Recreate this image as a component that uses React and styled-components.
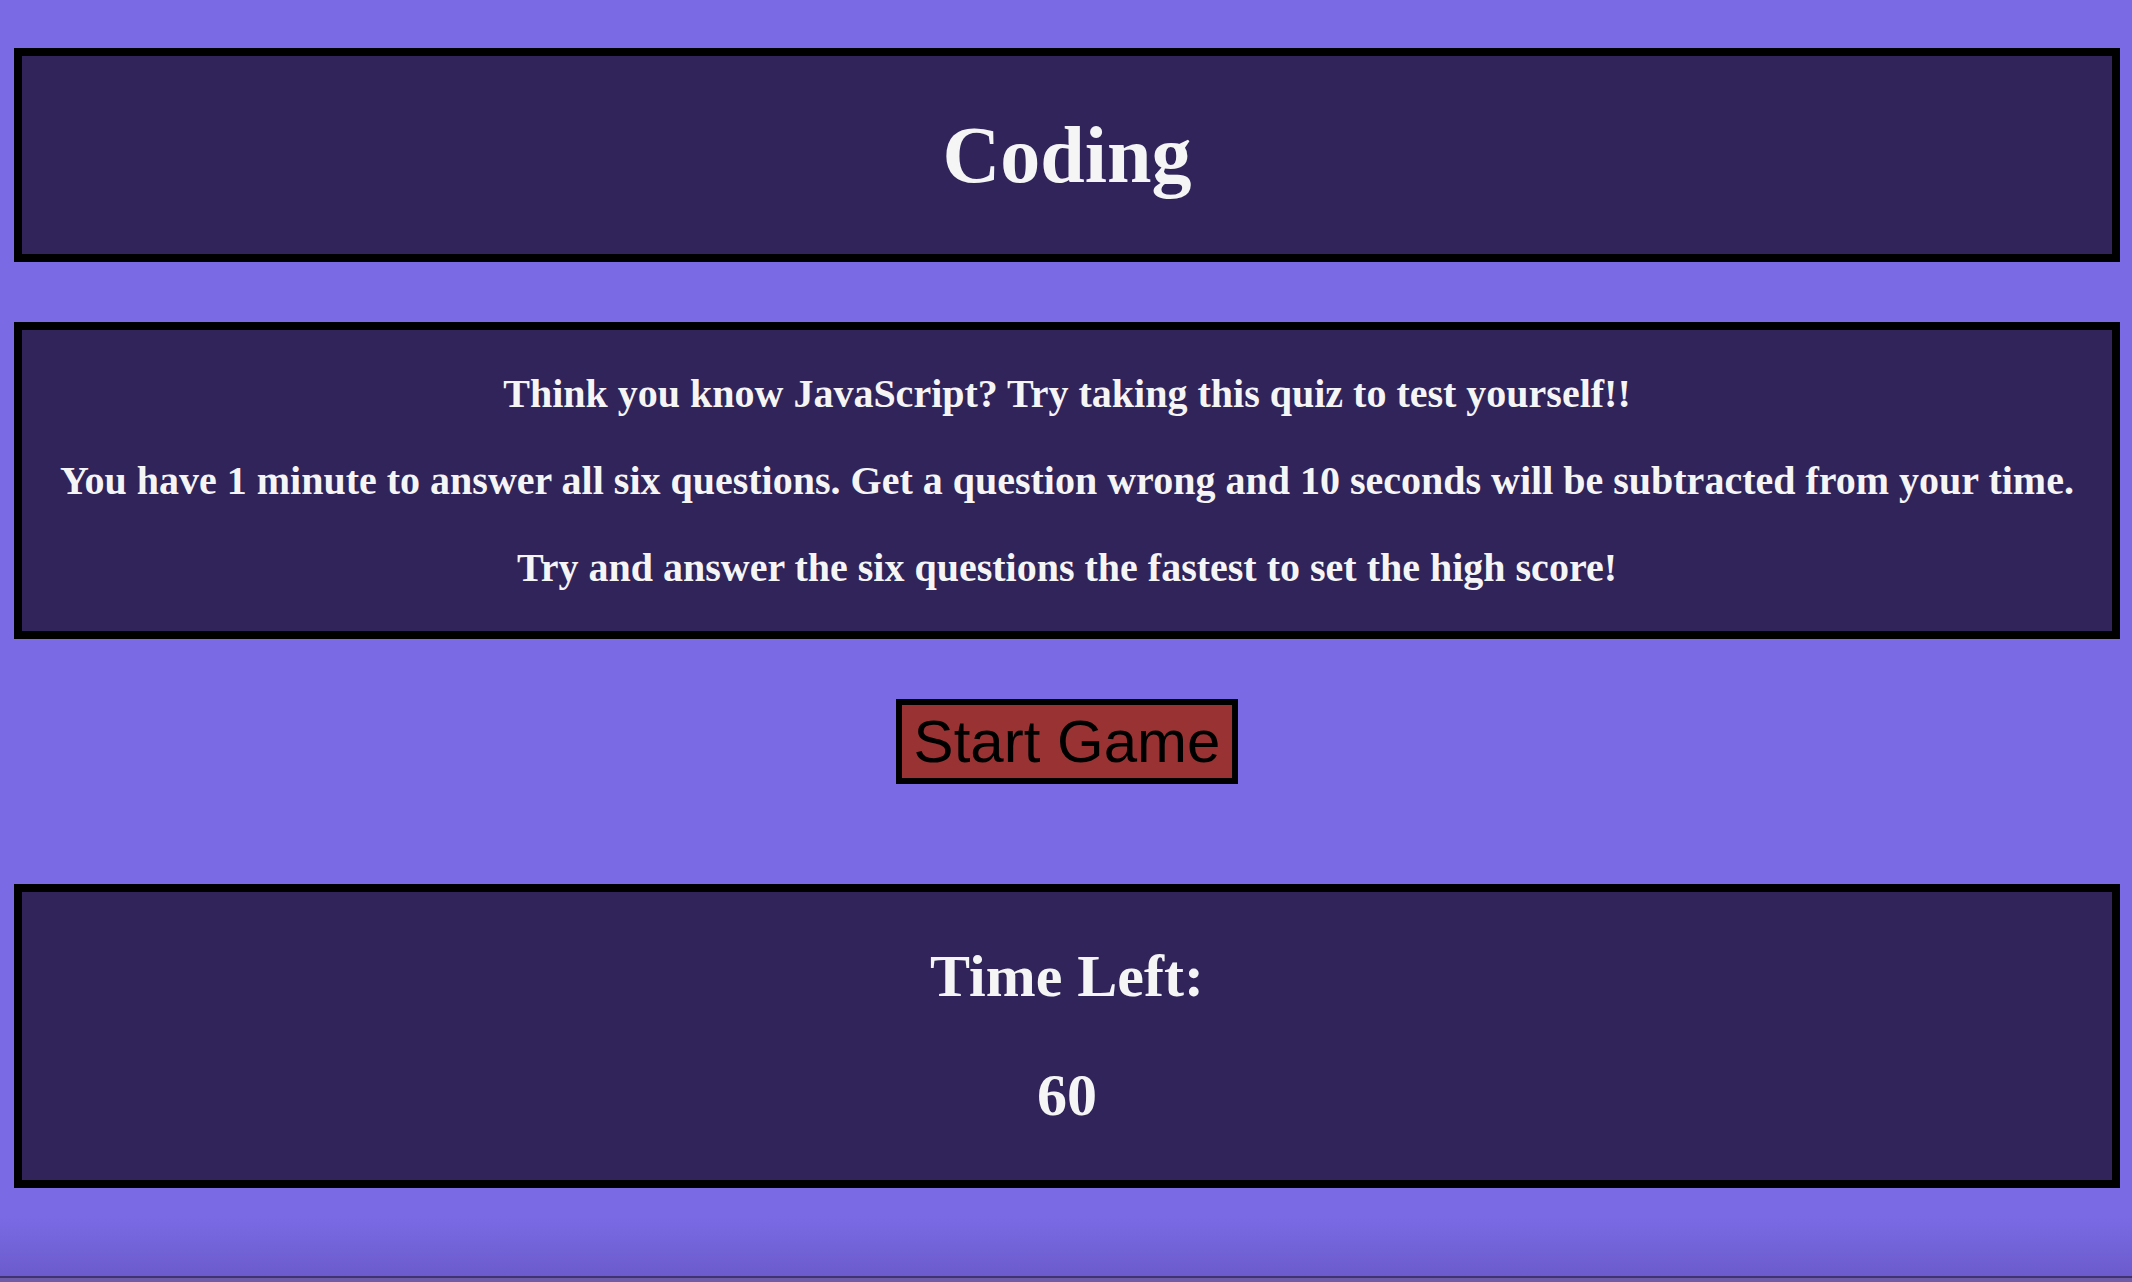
import React from "react";
import styled, { createGlobalStyle } from "styled-components";

const GlobalStyle = createGlobalStyle`
  html, body {
    margin: 0;
    padding: 0;
  }
  body {
    font-family: "Liberation Serif", "Times New Roman", serif;
    background: #7a6be5;
  }
`;

const Page = styled.main`
  min-height: 100vh;
  box-sizing: border-box;
  padding: 48px 12px 0 14px;
  display: flex;
  flex-direction: column;
  gap: 60px;
  background: linear-gradient(
    to bottom,
    #7a6be5 0,
    #7a6be5 1217px,
    #6b5bcc 1276px,
    #3f3470 1276px,
    #3f3470 1278px,
    #6e5ca8 1278px
  );
  color: #f5f5f5;
`;

const Panel = styled.section`
  background: #30245a;
  border: 8px solid #000;
  text-align: center;
  font-weight: bold;
`;

const Title = styled.h1`
  margin: 53.6px 0;
  font-size: 80px;
  font-weight: bold;
`;

const Line = styled.p`
  margin: 40px 0;
  font-size: 40px;
  font-weight: bold;
`;

const Heading = styled.h2`
  margin: 50px 0;
  font-size: 60px;
  font-weight: bold;
`;

const ButtonRow = styled.div`
  display: flex;
  justify-content: center;
  margin-bottom: 40px;
`;

const StartButton = styled.button`
  font-family: "Liberation Sans", Arial, sans-serif;
  font-size: 60px;
  line-height: normal;
  color: #000;
  background: #993333;
  border: 6px solid #000;
  border-radius: 0;
  padding: 2px 12px;
  cursor: pointer;
`;

export default function App() {
  return (
    <>
      <GlobalStyle />
      <Page>
        <Panel>
          <Title>Coding</Title>
        </Panel>
        <Panel>
          <Line>Think you know JavaScript? Try taking this quiz to test yourself!!</Line>
          <Line>
            You have 1 minute to answer all six questions. Get a question wrong and 10 seconds will be subtracted from your time.
          </Line>
          <Line>Try and answer the six questions the fastest to set the high score!</Line>
        </Panel>
        <ButtonRow>
          <StartButton>Start Game</StartButton>
        </ButtonRow>
        <Panel>
          <Heading>Time Left:</Heading>
          <Heading>60</Heading>
        </Panel>
      </Page>
    </>
  );
}
